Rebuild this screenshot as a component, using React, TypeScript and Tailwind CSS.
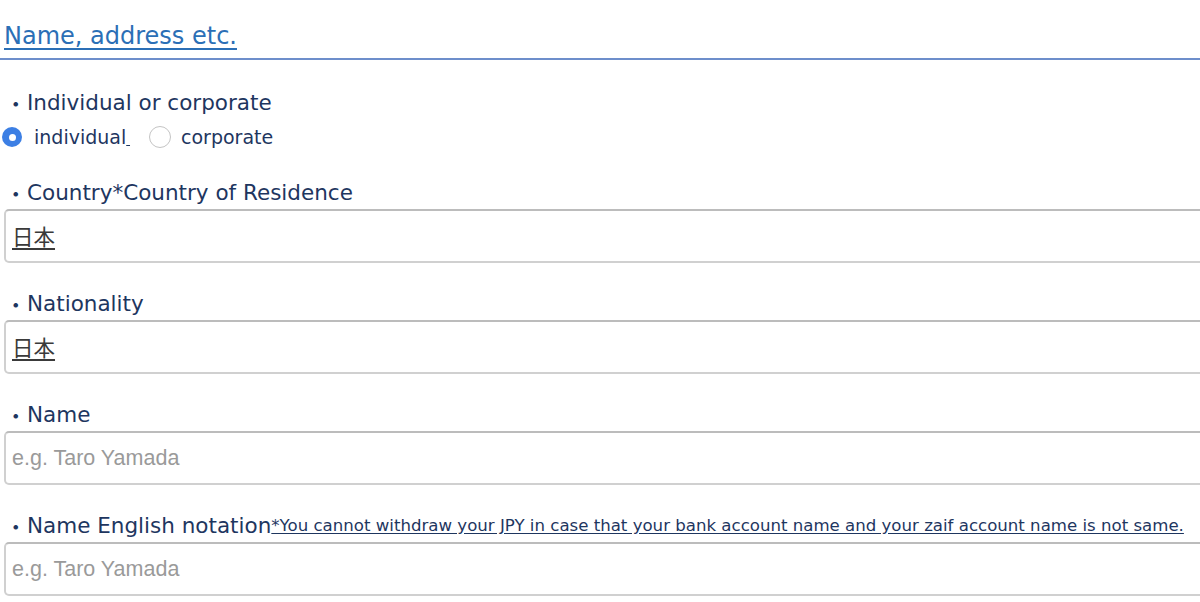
const LABEL_FONT = "font-['DejaVu_Sans','Noto_Sans_CJK_JP',sans-serif]";

function Label({ children }: { children: React.ReactNode }) {
  return (
    <div className={`flex items-center h-[30px] pt-[2px] pl-[5px] text-[21.5px] text-[#1e365f] ${LABEL_FONT}`}>
      <span className="font-['Noto_Sans_CJK_JP',sans-serif] w-[22px]">・</span>
      {children}
    </div>
  );
}

function Field({ value, placeholder }: { value?: string; placeholder?: string }) {
  return (
    <div className="ml-[4px] mt-[2px] w-[1240px] h-[54px] rounded-[5px] border-2 border-[#d0d0d0] border-t-[#bcbcbc] bg-white flex items-center px-[6px]">
      {value ? (
        <span className="text-[21.5px] text-[#3a3a3a] underline underline-offset-[3px] font-['Noto_Sans_CJK_JP',sans-serif]">
          {value}
        </span>
      ) : (
        <span className="text-[21.5px] text-[#9a9a9a] font-['Liberation_Sans',sans-serif]">
          {placeholder}
        </span>
      )}
    </div>
  );
}

function Radio({ checked }: { checked?: boolean }) {
  return checked ? (
    <span className="shrink-0 w-[20px] h-[20px] rounded-full bg-[#3c7fe4] flex items-center justify-center">
      <span className="w-[7px] h-[7px] rounded-full bg-white" />
    </span>
  ) : (
    <span className="shrink-0 inline-block w-[22px] h-[22px] rounded-full border border-[#c4c4c4] bg-white" />
  );
}

export default function App() {
  return (
    <div className="w-[1200px] h-[602px] overflow-hidden bg-white">
      <div className="pt-[20px]">
        <h2 className="pl-[4px] h-[32px] flex items-center text-[24px] text-[#2b6fb6] underline underline-offset-[4px] font-['DejaVu_Sans',sans-serif]">
          Name, address etc.
        </h2>
        <div className="mt-[6px] h-[2px] bg-[#6d8ecb]" />
      </div>

      <div className="mt-[27px]">
        <Label>Individual or corporate</Label>
        <div className={`mt-[5px] flex items-center h-[30px] pl-[2px] text-[19px] text-[#1e365f] ${LABEL_FONT}`}>
          <Radio checked />
          <span className="ml-[12px]">
            individual<span className="underline">{"\u2009"}</span>
          </span>
          <span className="ml-[19px] flex items-center">
            <Radio />
          </span>
          <span className="ml-[10px]">corporate</span>
        </div>
      </div>

      <div className="mt-[25px] flex flex-col">
        <Label>Country*Country of Residence</Label>
        <Field value="日本" />
      </div>

      <div className="mt-[25px] flex flex-col">
        <Label>Nationality</Label>
        <Field value="日本" />
      </div>

      <div className="mt-[25px] flex flex-col">
        <Label>Name</Label>
        <Field placeholder="e.g. Taro Yamada" />
      </div>

      <div className="mt-[25px] flex flex-col">
        <Label>
          Name English notation
          <span className="text-[16.6px] underline underline-offset-[2px] whitespace-nowrap">
            *You cannot withdraw your JPY in case that your bank account name and your zaif account name is not same.
          </span>
        </Label>
        <Field placeholder="e.g. Taro Yamada" />
      </div>
    </div>
  );
}
